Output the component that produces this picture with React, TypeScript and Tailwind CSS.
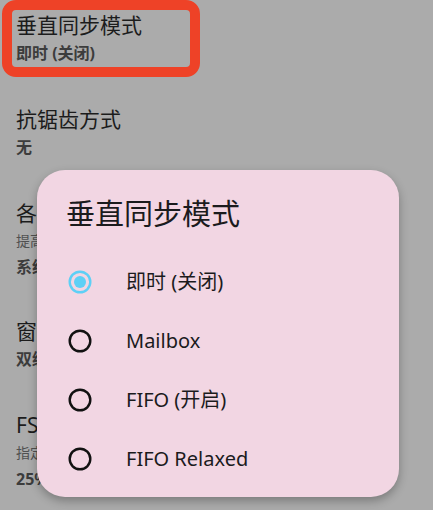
import React from "react";

const items = [
  { title: "垂直同步模式", value: "即时 (关闭)" },
  { title: "抗锯齿方式", value: "无" },
  { title: "各向异性过滤", desc: "提高倾斜表面纹理的清晰度", value: "系统默认" },
  { title: "窗口缓冲模式", value: "双缓冲" },
  { title: "FSR 渲染比例", desc: "指定内部渲染分辨率比例", value: "25%" },
];

const options = ["即时 (关闭)", "Mailbox", "FIFO (开启)", "FIFO Relaxed"];

function Radio({ checked }: { checked: boolean }) {
  return (
    <svg width="24" height="24" viewBox="0 0 24 24" className="shrink-0">
      <circle
        cx="12"
        cy="12"
        r="10.3"
        fill="none"
        stroke={checked ? "#5ed0f6" : "#111111"}
        strokeWidth="2.4"
      />
      {checked ? <circle cx="12" cy="12" r="6" fill="#5ed0f6" /> : null}
    </svg>
  );
}

function SettingRow({
  title,
  desc,
  value,
}: {
  title: string;
  desc?: string;
  value: string;
}) {
  return (
    <div className="px-4 py-[19px]">
      <p className="text-[21px] leading-7 text-[#1c1c1c]">{title}</p>
      {desc ? (
        <p className="text-[14px] leading-7 text-[#505050]">{desc}</p>
      ) : null}
      <p
        className={`text-[16px] font-bold text-[#3c3c3c] ${desc ? "leading-6" : "leading-7"}`}
      >
        {value}
      </p>
    </div>
  );
}

export default function App() {
  return (
    <div
      className="relative h-[510px] w-[433px] overflow-hidden bg-[#ababab]"
      style={{ fontFamily: '"Noto Sans", "Noto Sans CJK SC", sans-serif' }}
    >
      <div className="-mt-2">
        {items.map((item) => (
          <SettingRow key={item.title} {...item} />
        ))}
      </div>

      <div className="absolute left-[2px] top-0 h-[77px] w-[198px] rounded-[14px] border-[10px] border-[#ee4227]" />

      <div className="absolute left-[37px] top-[170px] h-[327px] w-[362px] rounded-[28px] bg-[#f2d6e3] shadow-[0_4px_10px_rgba(0,0,0,0.28)]">
        <p className="pl-[29px] pt-[26px] text-[29px] leading-9 text-[#1b1b1d]">
          垂直同步模式
        </p>
        <div className="mt-5 flex flex-col">
          {options.map((label, index) => (
            <div
              key={label}
              className="flex h-[59px] items-center gap-[34px] pl-[31px]"
            >
              <Radio checked={index === 0} />
              <span className="text-[20px] text-[#1b1b1d]">{label}</span>
            </div>
          ))}
        </div>
      </div>
    </div>
  );
}
